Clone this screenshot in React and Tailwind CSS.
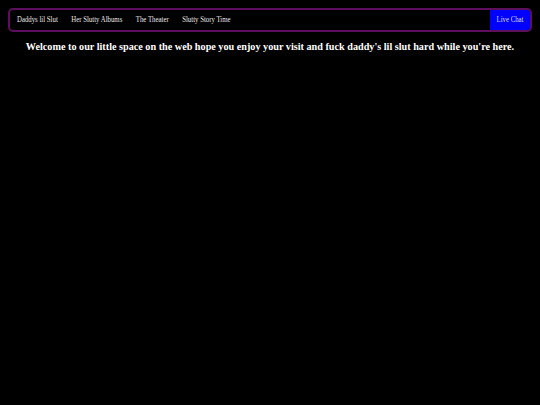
const NAV_LINKS = ["Daddys lil Slut", "Her Slutty Albums", "The Theater", "Slutty Story Time"];

export default function App() {
  return (
    <div
      className="min-h-[405px] w-full bg-black text-white"
      style={{ fontFamily: '"Liberation Serif", "Times New Roman", serif' }}
    >
      <div className="px-2 pt-2">
        <nav className="flex h-6 items-stretch rounded-[5px] border-2 border-[#5c0f5c] bg-black">
          <ul className="flex flex-1 items-center gap-[13.5px] pl-[7px] text-[6.8px] text-[#e8e8e8]">
            {NAV_LINKS.map((l) => (
              <li key={l} className="scale-y-[1.2]">
                <a href="#">{l}</a>
              </li>
            ))}
          </ul>
          <a
            href="#"
            className="flex w-[40px] items-center justify-center rounded-r-[3px] bg-[#0000ff] text-[#dcdcff]"
          >
            <span className="block scale-y-[1.2] text-[6.8px]">Live Chat</span>
          </a>
        </nav>
      </div>
      <h2 className="mt-[8px] text-center text-[10.2px] font-bold leading-[13px]">
        Welcome to our little space on the web hope you enjoy your visit and fuck daddy's lil slut
        hard while you're here.
      </h2>
    </div>
  );
}
